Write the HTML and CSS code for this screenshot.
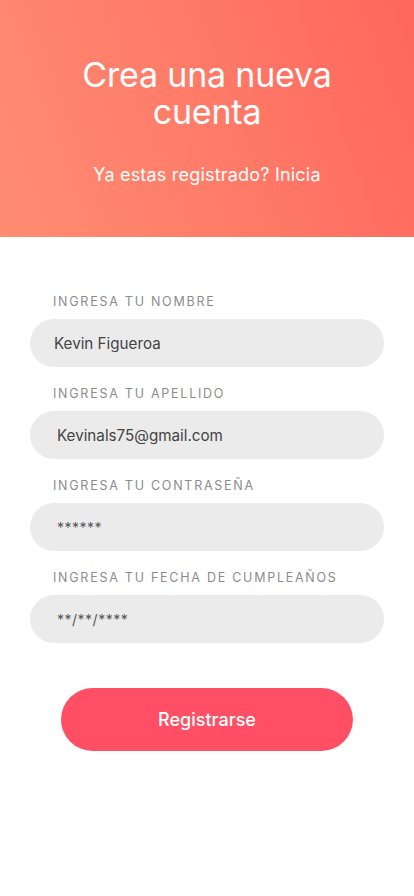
FILE: index.html
```html
<!DOCTYPE html>
<html lang="es">
<head>
<meta charset="utf-8">
<title>Crea una nueva cuenta</title>
<link rel="stylesheet" href="styles.css">
</head>
<body>
<header class="hero">
  <h1 class="hero-title">Crea una nueva<br>cuenta</h1>
  <p class="hero-sub">Ya estas registrado? Inicia</p>
</header>
<main class="form">
  <div class="field">
    <label class="field-label">INGRESA TU NOMBRE</label>
    <div class="field-input">Kevin Figueroa</div>
  </div>
  <div class="field">
    <label class="field-label">INGRESA TU APELLIDO</label>
    <div class="field-input shift">Kevinals75@gmail.com</div>
  </div>
  <div class="field">
    <label class="field-label">INGRESA TU CONTRASEÑA</label>
    <div class="field-input shift mask">******</div>
  </div>
  <div class="field">
    <label class="field-label">INGRESA TU FECHA DE CUMPLEAÑOS</label>
    <div class="field-input shift mask">**/**/****</div>
  </div>
  <div class="actions">
    <button class="btn">Registrarse</button>
  </div>
</main>
</body>
</html>
```

FILE: styles.css
```css
* { box-sizing: border-box; }
body {
  margin: 0;
  background: #ffffff;
  font-family: Inter, "Open Sans", sans-serif;
  width: 414px;
}
.hero {
  height: 237px;
  background: linear-gradient(70deg, #ff8c73 0%, #ff7b68 50%, #ff665c 100%);
  color: #ffffff;
  display: flex;
  flex-direction: column;
  align-items: center;
  padding-top: 56px;
  text-align: center;
}
.hero-title {
  margin: 0;
  font-weight: 400;
  font-size: 34px;
  line-height: 37px;
  letter-spacing: -0.2px;
}
.hero-sub {
  margin: 34px 0 0;
  font-size: 18px;
  line-height: 22px;
  font-weight: 400;
  letter-spacing: 0.2px;
}
.form {
  padding: 57px 30px 0;
  display: flex;
  flex-direction: column;
  gap: 19px;
}
.field {
  display: flex;
  flex-direction: column;
  gap: 9px;
}
.field-label {
  padding-left: 23px;
  font-size: 12.5px;
  line-height: 16px;
  letter-spacing: 1.75px;
  color: #8c8c8c;
}
.field-input {
  height: 48px;
  border-radius: 24px;
  background: #ebebeb;
  padding-left: 24px;
  display: flex;
  align-items: center;
  font-size: 15.2px;
  color: #444444;
}
.field-input.shift { padding-left: 27px; }
.field-input.mask { font-size: 14px; letter-spacing: 0.5px; color: #555555; }
.actions {
  display: flex;
  justify-content: center;
  padding-top: 26px;
}
.btn {
  width: 292px;
  height: 63px;
  border: none;
  border-radius: 32px;
  background: #ff4f64;
  color: #ffffff;
  font-family: Inter, "Open Sans", sans-serif;
  font-size: 18px;
  font-weight: 500;
}
```
